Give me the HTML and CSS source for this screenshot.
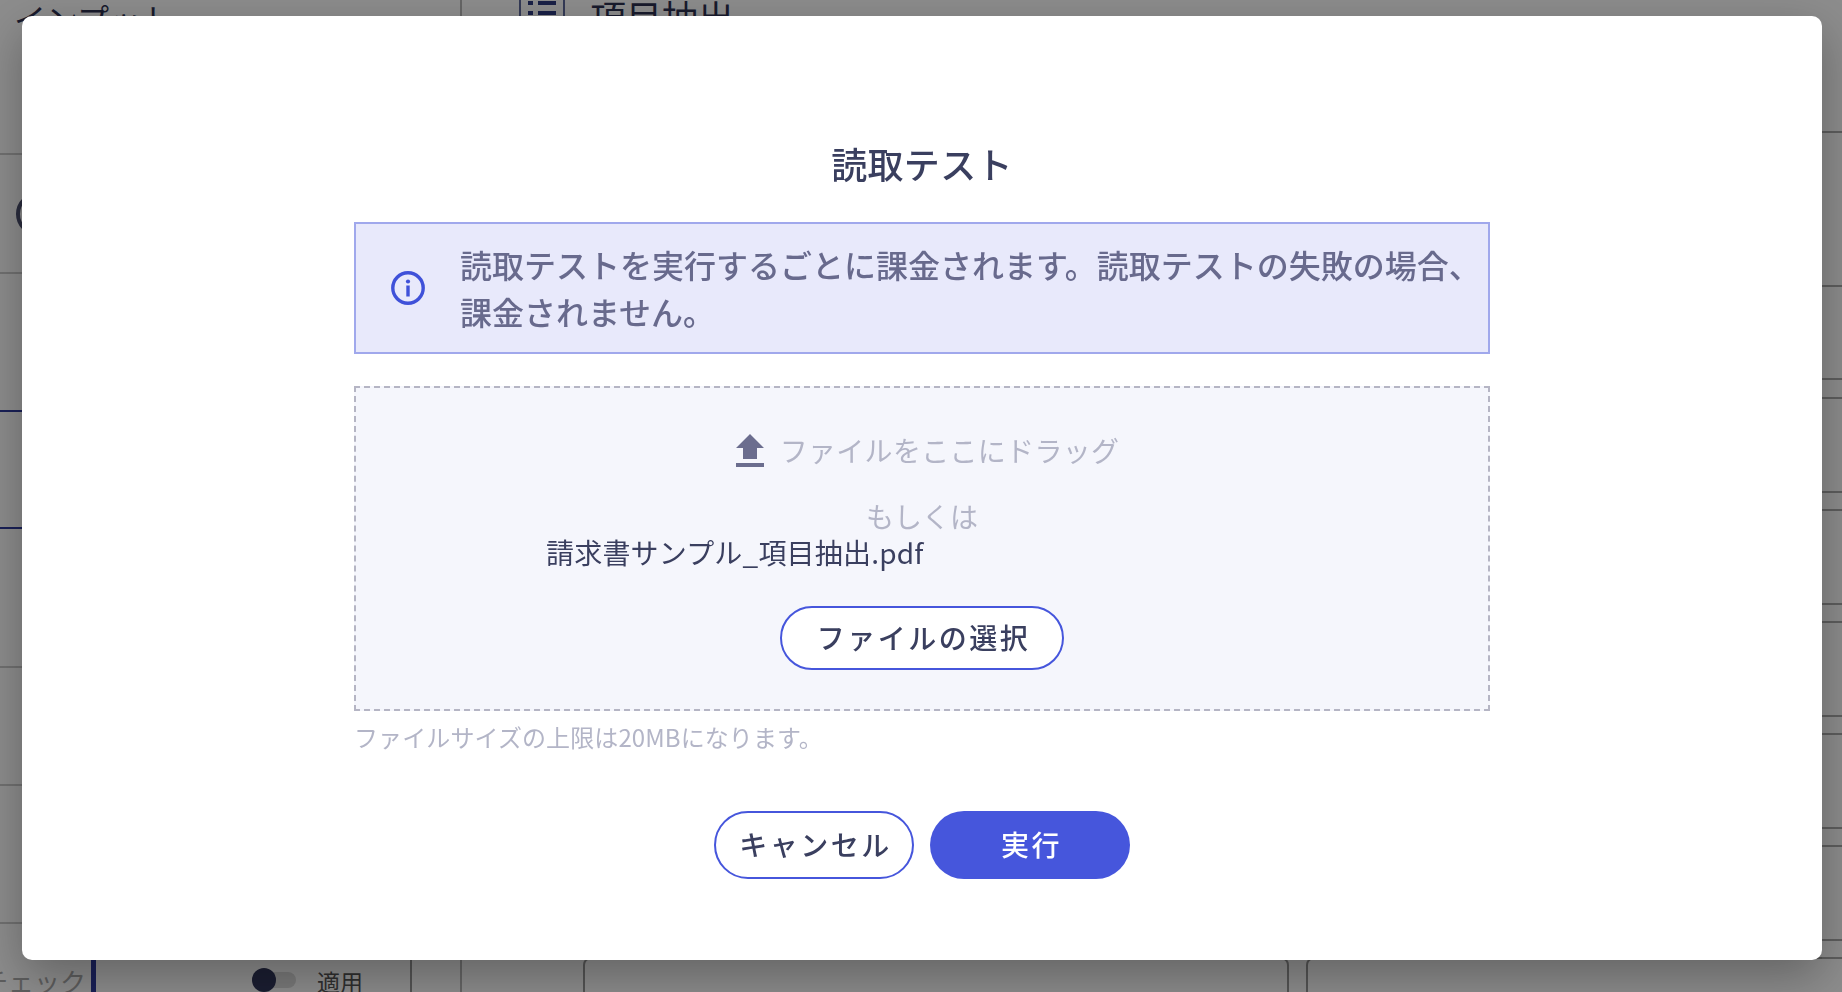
FILE: index.html
```html
<!DOCTYPE html>
<html lang="ja">
<head>
<meta charset="utf-8">
<title>読取テスト</title>
<link rel="stylesheet" href="styles.css">
</head>
<body>
<div class="app">
  <div class="col col-left">
    <div class="left-head"><span class="input-text">インプット</span></div>
    <div class="row row-a"><span class="ring"></span></div>
    <div class="row row-b"></div>
    <div class="row row-c"></div>
    <div class="row row-d"></div>
    <div class="row row-e"></div>
    <div class="row row-f"></div>
    <div class="row-last">
      <span class="check-text">チェック</span>
      <span class="blue-bar"></span>
      <div class="apply-cell">
        <span class="toggle"><span class="knob"></span></span>
        <span class="apply">適用</span>
      </div>
    </div>
  </div>
  <div class="col col-main">
    <div class="main-head">
      <svg class="list-icon" viewBox="0 0 46 16" aria-hidden="true"><path d="M1 0v16M45 0v16" stroke="#5f6a9c" stroke-width="2" fill="none"/><path d="M9 1h5v4H9zM9 11h5v4H9zM19 1h18v4H19zM19 11h18v4H19z" fill="#2e3a80"/></svg>
      <span class="extract-text">項目抽出</span>
    </div>
    <div class="bottom-boxes">
      <div class="box box-one"></div>
      <div class="box box-two"></div>
    </div>
  </div>
  <div class="col col-right">
    <div class="ln l1"></div><div class="ln l2"></div><div class="ln l3"></div><div class="ln l4"></div><div class="ln l5"></div><div class="ln l4"></div><div class="ln l5"></div><div class="ln l4"></div><div class="ln l5"></div><div class="ln l4"></div><div class="ln l5"></div><div class="ln l4"></div><div class="ln l5"></div><div class="ln"></div>
  </div>
</div>

<div class="overlay">
  <div class="modal">
    <h1 class="title">読取テスト</h1>
    <div class="notice">
      <svg class="info-icon" viewBox="0 0 34 34" aria-hidden="true">
        <circle cx="17" cy="17" r="15.2" fill="none" stroke="#3f51d9" stroke-width="3.4"/>
        <circle cx="17" cy="10.5" r="2.1" fill="#3f51d9"/>
        <rect x="15.3" y="14.5" width="3.4" height="11" fill="#3f51d9"/>
      </svg>
      <p class="notice-text">読取テストを実行するごとに課金されます。読取テストの失敗の場合、課金されません。</p>
    </div>
    <div class="drop">
      <div class="drop-line">
        <svg class="upload-icon" viewBox="0 0 28 33" aria-hidden="true"><path d="M14 0 L28 14 H21 V25 H7 V14 H0 Z M0 29 H28 V33 H0 Z" fill="#6b6d8e"/></svg>
        <span>ファイルをここにドラッグ</span>
      </div>
      <div class="drop-or">もしくは</div>
      <div class="file-name">請求書サンプル_項目抽出.pdf</div>
      <button class="btn btn-file" type="button">ファイルの選択</button>
    </div>
    <p class="limit">ファイルサイズの上限は20MBになります。</p>
    <div class="actions">
      <button class="btn btn-cancel" type="button">キャンセル</button>
      <button class="btn btn-run" type="button">実行</button>
    </div>
  </div>
</div>
</body>
</html>
```

FILE: styles.css
```css
* { box-sizing: border-box; }
html, body { margin: 0; height: 100%; overflow: hidden; }
body { background: #fff; font-family: "Noto Sans CJK JP", "Noto Sans", sans-serif; color: #3a3f5f; }

.app { display: flex; width: 1842px; height: 992px; overflow: hidden; }
.col { height: 992px; flex: none; }
.col-left { width: 462px; border-right: 2px solid #b8b8b8; display: flex; flex-direction: column; }
.col-main { width: 1360px; display: flex; flex-direction: column; }
.col-right { width: 20px; padding-top: 131px; }

.left-head { height: 155px; flex: none; padding: 0 0 0 14px; border-bottom: 2px solid #ccc; overflow: hidden; }
.input-text { display: block; font-size: 32px; line-height: 36px; color: #2c3050; }
.row { flex: none; border-bottom: 2px solid #ccc; }
.row-a { height: 119px; display: flex; align-items: center; padding-left: 16px; }
.ring { width: 44px; height: 44px; border: 4px solid #4c5070; border-radius: 50%; }
.row-b { height: 138px; border-bottom-color: #2e3a9e; }
.row-c { height: 117px; border-bottom-color: #2e3a9e; }
.row-d { height: 139px; }
.row-e { height: 118px; }
.row-f { height: 138px; }
.row-last { flex: 1; display: flex; min-height: 0; overflow: hidden; }
.check-text { margin: 42px 0 0 -18px; width: 109px; flex: none; font-size: 26px; line-height: 30px; color: #aaa; white-space: nowrap; }
.blue-bar { width: 5px; flex: none; background: #2e3a9e; }
.apply-cell { display: flex; align-items: flex-start; width: 316px; flex: none; padding: 44px 0 0 156px; border-right: 2px solid #999; }
.toggle { width: 44px; height: 16px; margin-top: 4px; flex: none; background: #ddd; border-radius: 8px; display: flex; align-items: center; }
.knob { width: 24px; height: 24px; border-radius: 50%; background: #31365a; flex: none; }
.apply { margin: -2px 0 0 21px; font-size: 23px; line-height: 30px; color: #555; white-space: nowrap; }

.main-head { display: flex; gap: 27px; align-items: flex-start; padding-left: 57px; height: 40px; overflow: hidden; }
.list-icon { width: 46px; height: 16px; flex: none; }
.extract-text { margin: -2px 0 0 -2px; font-size: 36px; line-height: 36px; color: #2c3050; white-space: nowrap; }
.bottom-boxes { margin-top: auto; height: 35px; display: flex; gap: 17px; padding-left: 121px; }
.box { border-top: 2px solid #999; border-left: 2px solid #999; }
.box-one { width: 706px; border-right: 2px solid #999; border-radius: 8px 8px 0 0; }
.box-two { flex: 1; border-radius: 8px 0 0 0; }

.ln { height: 2px; background: #aaa; }
.l1 { margin-bottom: 152px; }
.l2 { margin-bottom: 91px; }
.l3 { margin-bottom: 17px; }
.l4 { margin-bottom: 92px; }
.l5 { margin-bottom: 16px; }

.overlay {
  position: fixed; inset: 0;
  background: rgba(0, 0, 0, .45);
  padding: 16px 20px 32px 22px;
}
.modal {
  width: 1800px; height: 944px;
  background: #fff; border-radius: 10px;
  box-shadow: 0 16px 48px rgba(0, 0, 0, .3);
  display: flex; flex-direction: column; align-items: center;
  padding-top: 121px;
}
.title { margin: 0 0 33px; font-size: 36px; line-height: 52px; font-weight: 500; letter-spacing: .3px; color: #3a3f5f; }

.notice {
  width: 1136px; height: 132px; flex: none;
  background: #e8e9fb; border: 2px solid #a0a8ec;
  display: flex; align-items: center; padding-left: 35px;
}
.info-icon { width: 34px; height: 34px; flex: none; margin: 0 35px 0 0; }
.notice-text { margin: 0; width: 1030px; font-size: 32px; line-height: 47px; font-weight: 500; color: #686a8d; }

.drop {
  width: 1136px; height: 325px; margin-top: 32px; flex: none;
  background: #f5f6fc; border: 2px dashed #b5b5c4;
  display: flex; flex-direction: column; align-items: center;
}
.drop-line { display: flex; align-items: center; margin: 44px 0 0 11px; height: 36px; font-size: 28px; letter-spacing: .3px; color: #b3b5c7; gap: 16px; }
.upload-icon { width: 28px; height: 33px; }
.drop-or { margin-top: 30px; font-size: 28px; line-height: 36px; color: #b3b5c7; }
.file-name { align-self: flex-start; margin: 0 0 0 190px; font-size: 28px; line-height: 36px; letter-spacing: .2px; color: #3a3f5f; }

.btn { font-family: inherit; border-radius: 34px; font-weight: 500; padding: 0 0 2px 3px; font-size: 28px; letter-spacing: 2.5px; }
.btn-file { margin-top: 36px; width: 284px; height: 64px; background: #fff; border: 2px solid #4656dc; color: #3a3f5f; }

.limit { width: 1136px; margin: 8px 0 0; font-size: 24px; line-height: 36px; letter-spacing: .1px; color: #b3b5c7; }

.actions { display: flex; gap: 16px; margin-top: 56px; }
.btn-cancel { width: 200px; height: 68px; background: #fff; border: 2px solid #4656dc; color: #3a3f5f; }
.btn-run { width: 200px; height: 68px; background: #4656dc; border: 0; color: #fff; }
```
